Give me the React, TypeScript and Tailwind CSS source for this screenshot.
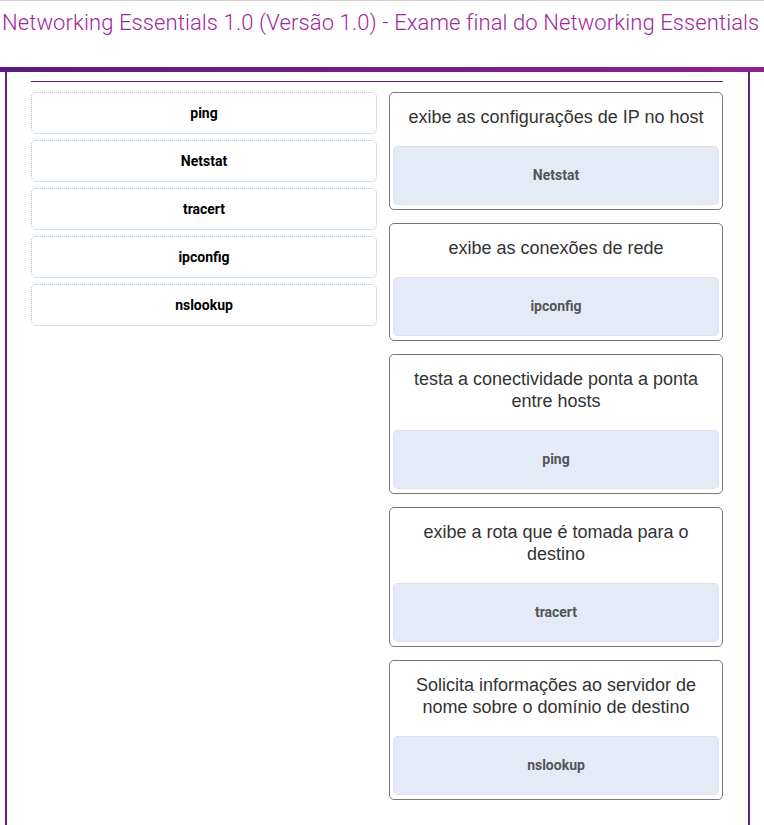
import React from "react";

// Matching exercise: tools on the left, descriptions with their answers on the right
const options = ["ping", "Netstat", "tracert", "ipconfig", "nslookup"];

const targets: { prompt: string[]; answer: string }[] = [
  { prompt: ["exibe as configurações de IP no host"], answer: "Netstat" },
  { prompt: ["exibe as conexões de rede"], answer: "ipconfig" },
  { prompt: ["testa a conectividade ponta a ponta", "entre hosts"], answer: "ping" },
  { prompt: ["exibe a rota que é tomada para o", "destino"], answer: "tracert" },
  {
    prompt: ["Solicita informações ao servidor de", "nome sobre o domínio de destino"],
    answer: "nslookup",
  },
];

export default function App() {
  return (
    <div className="w-[764px] h-[825px] overflow-hidden bg-white font-['Liberation_Sans',Arial,sans-serif]">
      {/* Header */}
      <div className="border-t border-[#d0d0d0] h-[67px]">
        <h1 className="pt-[9px] pl-[2px] text-[22px] leading-[26px] text-[#a0289c] font-['Roboto',sans-serif] font-light tracking-[0.1px] whitespace-nowrap">
          Networking Essentials 1.0 (Versão 1.0) - Exame final do Networking Essentials
        </h1>
      </div>
      <div className="h-[5px] bg-gradient-to-r from-[#5d1a78] to-[#8e1f8e]" />

      {/* Content box */}
      <div className="ml-[5px] w-[745px] h-[760px] border-l-2 border-r-2 border-[#6a1e7e] px-[24px] pt-[9px]">
        <div className="border-t border-[#5a1a6e] w-[692px]" />

        <div className="flex gap-[12px] pt-[10px] w-[692px]">
          {/* Options */}
          <div className="w-[346px] flex flex-col gap-[6px]">
            {options.map((o) => (
              <div
                key={o}
                className="h-[42px] border border-dotted border-[#a9c3dc] rounded-[5px] flex items-center justify-center text-[14px] font-bold text-black font-['Roboto',sans-serif]"
              >
                {o}
              </div>
            ))}
          </div>

          {/* Targets */}
          <div className="w-[334px] flex flex-col gap-[13px]">
            {targets.map((t) => (
              <div
                key={t.answer}
                className="border border-[#777] rounded-[5px] px-[3px] pt-[13px] pb-[4px]"
              >
                <div className="text-center text-[18px] leading-[22px] text-[#333] px-2">
                  {t.prompt.map((line) => (
                    <div key={line}>{line}</div>
                  ))}
                </div>
                <div className="mt-[18px] h-[59px] bg-[#e4ebf7] border border-dotted border-[#e6cdf2] rounded-[5px] flex items-center justify-center text-[14px] font-bold text-[#555] font-['Roboto',sans-serif]">
                  {t.answer}
                </div>
              </div>
            ))}
          </div>
        </div>
      </div>
    </div>
  );
}
